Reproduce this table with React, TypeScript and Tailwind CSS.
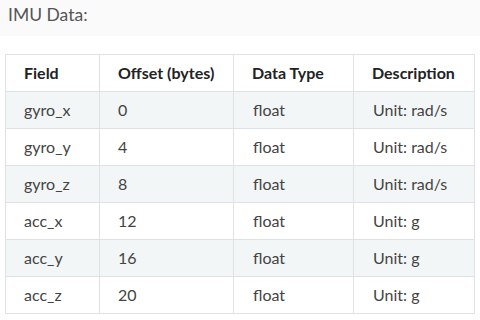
const rows = [
  { field: "gyro_x", offset: "0", type: "float", desc: "Unit: rad/s" },
  { field: "gyro_y", offset: "4", type: "float", desc: "Unit: rad/s" },
  { field: "gyro_z", offset: "8", type: "float", desc: "Unit: rad/s" },
  { field: "acc_x", offset: "12", type: "float", desc: "Unit: g" },
  { field: "acc_y", offset: "16", type: "float", desc: "Unit: g" },
  { field: "acc_z", offset: "20", type: "float", desc: "Unit: g" },
];

export default function App() {
  return (
    <div className="h-[320px] w-[480px] overflow-hidden bg-white font-['Lato','Liberation_Sans',sans-serif]">
      <div className="h-[36px] bg-[#fafafa] pl-[8px] pt-[2px] text-[17.5px] text-[#555]">IMU Data:</div>
      <div className="bg-white pl-[5px] pt-[18px]">
        <table className="w-[469px] table-fixed border-collapse text-[16px]">
          <colgroup>
            <col className="w-[94px]" />
            <col className="w-[134px]" />
            <col className="w-[120px]" />
            <col className="w-[121px]" />
          </colgroup>
          <thead>
            <tr className="h-[37px] bg-white">
              {["Field", "Offset (bytes)", "Data Type", "Description"].map((h) => (
                <th key={h} className="border border-[#dfe2e5] pl-[18px] text-left font-bold text-[#222]">
                  {h}
                </th>
              ))}
            </tr>
          </thead>
          <tbody>
            {rows.map((r, i) => (
              <tr key={r.field} className={i % 2 === 0 ? "h-[37px] bg-[#f3f6f7]" : "h-[37px] bg-white"}>
                <td className="border border-[#dfe2e5] pl-[18px] text-[#444]">{r.field}</td>
                <td className="border border-[#dfe2e5] pl-[18px] text-[#444]">{r.offset}</td>
                <td className="border border-[#dfe2e5] pl-[19px] text-[#444]">{r.type}</td>
                <td className="border border-[#dfe2e5] pl-[19px] text-[#444]">{r.desc}</td>
              </tr>
            ))}
          </tbody>
        </table>
      </div>
    </div>
  );
}
